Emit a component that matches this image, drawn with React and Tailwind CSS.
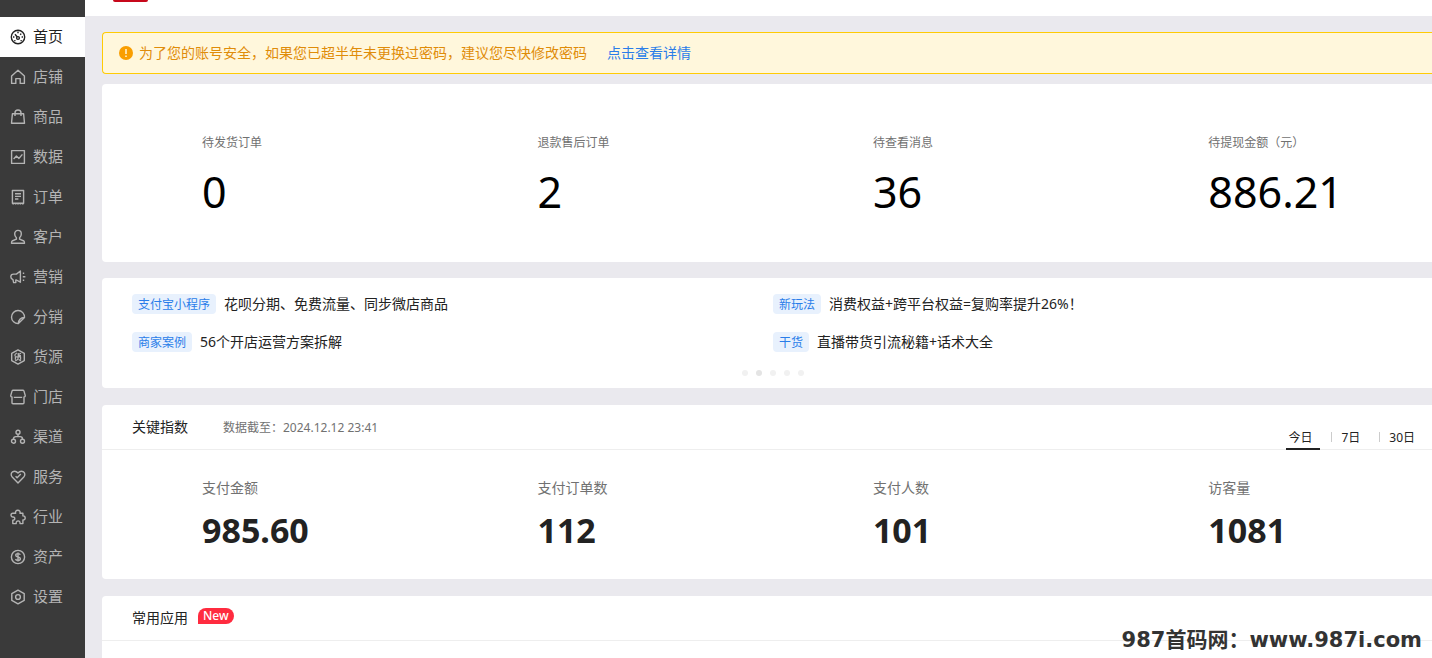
import React, { useState } from 'react';

const icons = {
  home: (
    <>
      <circle cx="8" cy="8" r="6.7" />
      <circle cx="8" cy="9" r="1.4" />
      <path d="M7.3 8 5 5.2M8 2.6v1.6M11.2 4.6l-1 1.2M3 8h1.4M11.6 8H13M4.2 11.6h1.3M10.5 11.6h1.3" />
    </>
  ),
  shop: <path d="M1.6 7 8 1.2 14.4 7v7.4h-4.2V9.6H5.8v4.8H1.6z" />,
  goods: (
    <>
      <path d="M2.4 4.8h11.2l.9 9.4h-13z" />
      <path d="M5 7V4a3 3 0 0 1 6 0v3" />
    </>
  ),
  data: (
    <>
      <path d="M1.6 1.6h12.8v12.8H1.6z" />
      <path d="m3.6 10 2.8-3 2.6 2.4 3.4-4" />
    </>
  ),
  order: (
    <>
      <path d="M2.4 1.5h11.2v12.700H2.400z" />
      <path d="M2.400 14.800h11.200" strokeDasharray="1.600 .8" />
      <path d="M5 4.800h6M5 7.400h6M5 10h3.400" />
    </>
  ),
  customer: (
    <path d="M8 1.400c2 0 3.300 1.400 3.300 3.500 0 1.800-.7 3-1.700 3.900v1.400l4.300 1.800c.5.300.6.8.6 2.200H1.500c0-1.400.1-1.900.6-2.200l4.300-1.800V8.800C5.400 7.900 4.700 6.700 4.700 4.900 4.700 2.800 6 1.400 8 1.400z" />
  ),
  marketing: (
    <>
      <path d="M10.400 2v11.200L6.400 11H5.800v2.600H3.600L3 10.600C1.600 10.200.8 9.200.8 7.800c0-1.600 1.200-2.700 2.800-2.700h2.800z" />
      <path d="M12.800 4.200h1.400M12.800 7.700h2.600M12.800 11.200h1.400" />
    </>
  ),
  distribution: (
    <path d="M8.400 14.500A6.500 6.500 0 1 1 14.500 8.400zM8.400 14.500c-.3-3.400 2.400-6.200 6.100-6.100" />
  ),
  source: (
    <>
      <path d="m8 .9 6.300 3.500v7.200L8 15.100l-6.300-3.500V4.400z" />
      <path
        d="M6.800 3.800 5 5.600v1.600M8.200 4v2.600h2.800M11 4.200 8.200 5.600M5.400 10.800V7.800h5.200v3M8 8.600v1.600L5.200 12M8.800 10.600l2.200 1.400"
        strokeWidth="1.200"
      />
    </>
  ),
  store: (
    <path d="M3.200 1.200h9.600c.6 0 1 .3 1.200.9l1.200 4.300c.2.900-.3 1.600-1.200 1.600v5.800c0 .6-.4 1-1 1H3c-.6 0-1-.4-1-1V8C1.100 8 .6 7.300.8 6.400L2 2.100c.2-.6.6-.9 1.200-.9zM3.800 8.400h8.400" />
  ),
  channel: (
    <>
      <circle cx="8" cy="3.200" r="2" />
      <circle cx="3.500" cy="12.200" r="2" />
      <circle cx="12.500" cy="12.200" r="2" />
      <path d="M8 5.200v2.400M3.500 10.200c0-1.600.8-2.600 2.300-2.600h4.400c1.500 0 2.300 1 2.300 2.600" />
    </>
  ),
  service: (
    <path d="M8 13.900 2.200 8C.6 6.200 1 3.900 2.500 2.900 4.200 1.800 6.400 2.200 8 4c1.600-1.800 3.800-2.200 5.500-1.100 1.500 1 1.900 3.300.3 5.100zM5.600 7.200l1.500 1.500L10.800 5" />
  ),
  industry: (
    <path d="M2.800 4.200h2.900c-.8-1.700.5-3 2.100-3s2.900 1.300 2.100 3h3v2.700c1.300-.2 2.300.8 2.300 2s-1 2.200-2.300 2v3.700H10c.3-1.600-.6-2.700-1.900-2.700s-2.200 1.100-1.900 2.700H2.800v-3.500c1.300 0 2-.8 2-1.700s-.8-1.500-1.800-1.400C1.800 8.100 1 7.300 1 6.100s.8-1.900 1.800-1.900z" />
  ),
  asset: (
    <>
      <circle cx="8" cy="8" r="6.600" />
      <path d="M8 3.400v9.200M10.300 5.800C10 4.900 9.200 4.600 8 4.600c-1.400 0-2.300.6-2.300 1.600 0 2.400 4.700 1.200 4.700 3.600 0 1-1 1.600-2.400 1.600S5.800 10.900 5.600 10" />
    </>
  ),
  settings: (
    <>
      <path d="m8 1.200 6.200 3.400v6.800L8 14.800l-6.200-3.400V4.600z" />
      <circle cx="8" cy="8" r="2.400" />
    </>
  ),
};

const navItems = [
  ['home', '首页'],
  ['shop', '店铺'],
  ['goods', '商品'],
  ['data', '数据'],
  ['order', '订单'],
  ['customer', '客户'],
  ['marketing', '营销'],
  ['distribution', '分销'],
  ['source', '货源'],
  ['store', '门店'],
  ['channel', '渠道'],
  ['service', '服务'],
  ['industry', '行业'],
  ['asset', '资产'],
  ['settings', '设置'],
];

const todos = [
  ['待发货订单', '0'],
  ['退款售后订单', '2'],
  ['待查看消息', '36'],
  ['待提现金额（元）', '886.21'],
];

const promos = [
  ['支付宝小程序', '花呗分期、免费流量、同步微店商品'],
  ['新玩法', '消费权益+跨平台权益=复购率提升26%！'],
  ['商家案例', '56个开店运营方案拆解'],
  ['干货', '直播带货引流秘籍+话术大全'],
];

const metrics = [
  ['支付金额', '985.60'],
  ['支付订单数', '112'],
  ['支付人数', '101'],
  ['访客量', '1081'],
];

function NavIcon({ name }) {
  return (
    <svg
      viewBox="0 0 16 16"
      className="size-4 shrink-0"
      fill="none"
      stroke="currentColor"
      strokeWidth="1.4"
      strokeLinejoin="round"
      aria-hidden="true"
    >
      {icons[name]}
    </svg>
  );
}

function Sidebar() {
  return (
    <nav className="w-[85px] shrink-0 bg-[#3a3a3a] pt-[17px]">
      <ul>
        {navItems.map(([name, label], i) => (
          <li key={name}>
            <a
              href={'#' + name}
              className={
                'flex h-10 items-center gap-[7px] pl-[10px] text-[15px] ' +
                (i === 0 ? 'bg-white text-[#222]' : 'text-[#b4b4b4]')
              }
            >
              <NavIcon name={name} />
              {label}
            </a>
          </li>
        ))}
      </ul>
    </nav>
  );
}

function PeriodTabs() {
  const [active, setActive] = useState('今日');
  return (
    <div className="-mb-px flex items-end self-end text-xs leading-4">
      {['今日', '7日', '30日'].map((tab, i) => (
        <React.Fragment key={tab}>
          {i > 0 && <span className="mb-2 h-[10px] w-px bg-[#ccc]" />}
          <button
            type="button"
            onClick={() => setActive(tab)}
            className={
              'border-b-2 pb-[2px] ' +
              (i === 0 ? 'mr-[11px] pr-2 pl-[2px] ' : i === 1 ? 'mr-[11px] pr-2 pl-[9px] ' : 'pl-[9px] ') +
              (active === tab ? 'border-[#222]' : 'border-transparent')
            }
          >
            {tab}
          </button>
        </React.Fragment>
      ))}
    </div>
  );
}

export default function App() {
  return (
    <div className="relative flex h-screen overflow-hidden bg-[#eae9ee] font-['Noto_Sans','Noto_Sans_CJK_SC',sans-serif] text-sm text-[#222]">
      <Sidebar />
      <div className="min-w-0 flex-1">
        <header className="h-4 bg-white pl-7">
          <div className="h-0.5 w-[35px] rounded-b-sm bg-[#c7081b]" />
        </header>
        <main className="pt-4 pl-[17px]">
          <div className="flex h-[42px] items-center rounded-l border border-r-0 border-[#ffcb05] bg-[#fff7dc] pl-4 text-[#df8c09]">
            <svg viewBox="0 0 14 14" className="mr-[6px] size-[14px]" aria-hidden="true">
              <circle cx="7" cy="7" r="7" fill="#f99e00" />
              <path d="M7 3v5M7 9.500v1.500" stroke="#fff7dc" strokeWidth="1.500" />
            </svg>
            <p>为了您的账号安全，如果您已超半年未更换过密码，建议您尽快修改密码</p>
            <a href="#security" className="ml-5 text-[#2a7de9]">点击查看详情</a>
          </div>

          <section className="mt-[10px] grid h-[178px] grid-cols-[3fr_3fr_3fr_2fr] rounded-l bg-white pt-[50px] pl-[100px]">
            {todos.map(([label, value]) => (
              <div key={label}>
                <h3 className="text-xs leading-[18px] text-[#717171]">{label}</h3>
                <p className="mt-[10px] text-[43px] leading-[60px] text-black">{value}</p>
              </div>
            ))}
          </section>

          <section className="mt-4 h-[110px] rounded-l bg-white pt-4 pr-[18px] pl-[30px]">
            <ul className="grid grid-cols-2 gap-y-[18px]">
              {promos.map(([tag, text]) => (
                <li key={tag} className="flex h-5 items-center gap-2">
                  <span className="h-5 rounded-sm bg-[#e8f1fd] px-[6px] text-xs leading-[22px] text-[#2a7de9]">{tag}</span>
                  <a href="#promo" className="leading-[22px]">{text}</a>
                </li>
              ))}
            </ul>
            <div className="mt-[18px] flex justify-center gap-2">
              {[0, 1, 2, 3, 4].map((n) => (
                <button
                  key={n}
                  type="button"
                  aria-label={'第' + (n + 1) + '页'}
                  className={'size-[6px] rounded-full ' + (n === 1 ? 'bg-[#e4e4e4]' : 'bg-[#f1f1f1]')}
                />
              ))}
            </div>
          </section>

          <section className="mt-[17px] h-[174px] rounded-l bg-white">
            <div className="flex h-[45px] items-center border-b border-[#eee] pr-[17px] pl-[30px]">
              <h2>关键指数</h2>
              <span className="ml-[35px] flex-1 pt-px text-xs text-[#717171]">数据截至：2024.12.12 23:41</span>
              <PeriodTabs />
            </div>
            <div className="grid grid-cols-[3fr_3fr_3fr_2fr] pt-7 pl-[100px]">
              {metrics.map(([label, value]) => (
                <div key={label}>
                  <h3 className="leading-5 text-[#717171]">{label}</h3>
                  <p className="mt-2 text-[34px] leading-[48px] font-bold">{value}</p>
                </div>
              ))}
            </div>
          </section>

          <section className="mt-[17px] h-24 rounded-l bg-white">
            <div className="flex h-[45px] items-center border-b border-[#eee] pl-[30px]">
              <h2>常用应用</h2>
              <span className="mb-1 ml-[10px] rounded-full rounded-bl-none bg-[#ff2b3f] px-[5px] text-xs leading-4 font-medium text-white">
                New
              </span>
            </div>
          </section>
        </main>
      </div>
      <div className="absolute right-[10px] bottom-1 font-['DejaVu_Sans','Noto_Sans_CJK_SC',sans-serif] text-[21px] leading-7 font-bold text-[#333]">
        987首码网：www.987i.com
      </div>
    </div>
  );
}
